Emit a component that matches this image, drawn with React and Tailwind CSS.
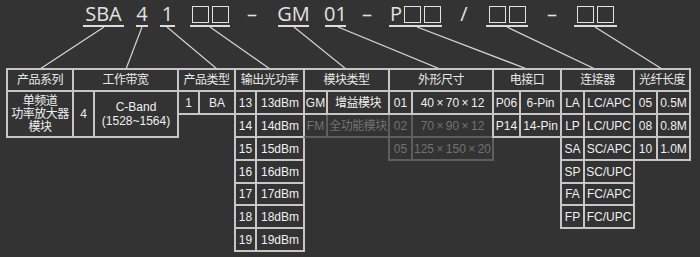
import React from 'react';

const LINE = 'border-[#c6c6c6]';
const DIM = 'border-[#5e5e5e]';
const ROW_H = ['h-[23px]', 'h-[23px]', 'h-[23px]', 'h-[23px]', 'h-[22px]', 'h-[23px]', 'h-[23px]'];

const Box = () => (
  <span className="inline-block w-[17px] h-[17px] border-[1.5px] border-[#e2e2e2]" />
);

// one piece of the product code, with its underline
const Seg = ({ className, children, plain }) => (
  <div className={`flex flex-col ${className}`}>
    <div className="flex items-center justify-center gap-[3px] h-[20px] leading-[20px]">{children}</div>
    {!plain && <div className="mt-[1px] h-[1.5px] bg-[#dcdcdc]" />}
  </div>
);

const Cell = ({ className = '', first, faded, keepLeft, children }) => (
  <div
    className={`flex items-center justify-center text-center whitespace-nowrap border-r-2 border-b-2 ${
      first ? 'border-l-2' : ''
    } ${faded ? `${DIM} text-[#727272]` : `${LINE} text-[#f0f0f0]`} ${keepLeft ? 'border-l-[#c6c6c6]' : ''} ${className}`}
  >
    {children}
  </div>
);

const Group = ({ className, title, children }) => (
  <div className={`flex flex-col -ml-[2px] ${className}`}>
    <div className={`h-[24px] border-2 ${LINE} flex items-center justify-center text-[#e8e8e8] tracking-[-0.5px]`}>
      {title}
    </div>
    {children}
  </div>
);

const Pair = ({ rows, a, b, fadedFrom = 99, keepLeft }) =>
  rows.map(([x, y], i) => (
    <div key={x} className={`flex ${ROW_H[i]}`}>
      <Cell className={a} first faded={i >= fadedFrom} keepLeft={keepLeft && i >= fadedFrom}>
        {x}
      </Cell>
      <Cell className={b} faded={i >= fadedFrom}>
        {y}
      </Cell>
    </div>
  ));

const links = [
  [104, 40],
  [142, 126],
  [167, 217],
  [210, 270],
  [294, 346],
  [338, 440],
  [417, 527],
  [507, 595],
  [595, 662],
];

export default function App() {
  return (
    <div className="w-[700px] h-[257px] bg-[#333333] overflow-hidden">
      {/* product code */}
      <div className="flex h-[27px] pt-[4px] text-[20px] text-[#e2e2e2] font-['Open_Sans',sans-serif]">
        <Seg className="ml-[83px] w-[41px]">SBA</Seg>
        <Seg className="ml-[12px] w-[12px]">4</Seg>
        <Seg className="ml-[12px] w-[15px]">1</Seg>
        <Seg className="ml-[15px] w-[40px]">
          <Box />
          <Box />
        </Seg>
        <Seg className="ml-[17px] w-[10px]" plain>
          –
        </Seg>
        <Seg className="ml-[21px] w-[31px]">GM</Seg>
        <Seg className="ml-[16px] w-[21px]">01</Seg>
        <Seg className="ml-[16px] w-[10px]" plain>
          –
        </Seg>
        <Seg className="ml-[17px] w-[53px]">
          <span className="mr-[-1px]">P</span>
          <Box />
          <Box />
        </Seg>
        <Seg className="ml-[18px] w-[8px]" plain>
          /
        </Seg>
        <Seg className="ml-[18px] w-[42px]">
          <Box />
          <Box />
        </Seg>
        <Seg className="ml-[19px] w-[10px]" plain>
          –
        </Seg>
        <Seg className="ml-[17px] w-[43px]">
          <Box />
          <Box />
        </Seg>
      </div>

      <svg width="700" height="41" className="block">
        {links.map(([x1, x2]) => (
          <line key={x1} x1={x1} y1="0" x2={x2} y2="42" stroke="#d6d6d6" strokeWidth="1.2" />
        ))}
      </svg>

      {/* table */}
      <div className="flex items-start pl-[8px] text-[12px] leading-[14px] font-['Liberation_Sans','Noto_Sans_CJK_SC',sans-serif] bg-[#333333]">
        <Group className="w-[68px]" title="产品系列">
          <Cell className="h-[46px] leading-[13px] tracking-[-0.5px]" first>
            单频道
            <br />
            功率放大器
            <br />
            模块
          </Cell>
        </Group>
        <Group className="w-[107px]" title="工作带宽">
          <div className="flex h-[46px]">
            <Cell className="w-[23px]" first>
              4
            </Cell>
            <Cell className="w-[84px] flex-col">
              <span>C-Band</span>
              <span>(1528~1564)</span>
            </Cell>
          </div>
        </Group>
        <Group className="w-[59px]" title="产品类型">
          <Pair rows={[['1', 'BA']]} a="w-[23px]" b="w-[36px]" />
        </Group>
        <Group className="w-[71px]" title="输出光功率">
          <Pair
            rows={['13', '14', '15', '16', '17', '18', '19'].map((n) => [n, `${n}dBm`])}
            a="w-[23px]"
            b="w-[48px]"
          />
        </Group>
        <Group className="w-[87px]" title="模块类型">
          <Pair
            rows={[
              ['GM', '增益模块'],
              ['FM', '全功能模块'],
            ]}
            a="w-[25px]"
            b="w-[62px] tracking-[-0.5px]"
            fadedFrom={1}
            keepLeft
          />
        </Group>
        <Group className="w-[106px]" title="外形尺寸">
          <Pair
            rows={[
              ['01', '40\u2009×\u200970\u2009×\u200912'],
              ['02', '70\u2009×\u200990\u2009×\u200912'],
              ['05', '125\u2009×\u2009150\u2009×\u200920'],
            ]}
            a="w-[25px]"
            b="w-[81px]"
            fadedFrom={1}
          />
        </Group>
        <Group className="w-[70px]" title="电接口">
          <Pair
            rows={[
              ['P06', '6-Pin'],
              ['P14', '14-Pin'],
            ]}
            a="w-[29px]"
            b="w-[41px]"
          />
        </Group>
        <Group className="w-[75px]" title="连接器">
          <Pair
            rows={[
              ['LA', 'LC/APC'],
              ['LP', 'LC/UPC'],
              ['SA', 'SC/APC'],
              ['SP', 'SC/UPC'],
              ['FA', 'FC/APC'],
              ['FP', 'FC/UPC'],
            ]}
            a="w-[25px]"
            b="w-[50px]"
          />
        </Group>
        <Group className="w-[58px]" title="光纤长度">
          <Pair
            rows={[
              ['05', '0.5M'],
              ['08', '0.8M'],
              ['10', '1.0M'],
            ]}
            a="w-[25px]"
            b="w-[33px]"
          />
        </Group>
      </div>
    </div>
  );
}
